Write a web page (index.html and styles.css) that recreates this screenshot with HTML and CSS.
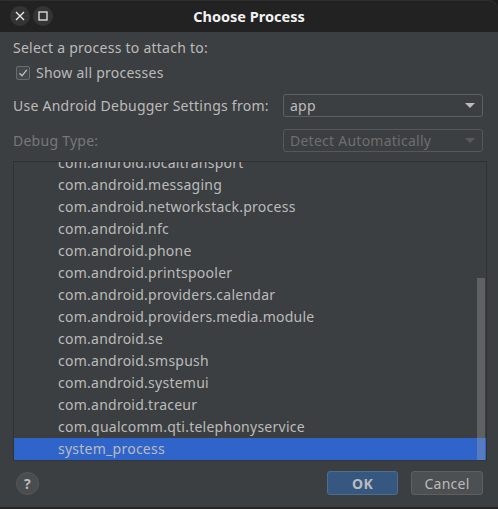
FILE: index.html
```html
<!DOCTYPE html>
<html>
<head>
<meta charset="utf-8">
<link rel="stylesheet" href="styles.css">
</head>
<body>
<div class="window">
  <div class="titlebar">
    <div class="wm-buttons">
      <span class="wm-btn">
        <svg width="10" height="10" viewBox="0 0 10 10"><path d="M1 1L9 9M9 1L1 9" stroke="#e6e6e6" stroke-width="1.4" fill="none"/></svg>
      </span>
      <span class="wm-btn">
        <svg width="10" height="10" viewBox="0 0 10 10"><rect x="1" y="1" width="8" height="8" stroke="#e6e6e6" stroke-width="1.3" fill="none"/></svg>
      </span>
    </div>
    <div class="title">Choose Process</div>
  </div>
  <div class="content">
    <div class="label first">Select a process to attach to:</div>
    <label class="check-row">
      <span class="checkbox">
        <svg width="12" height="12" viewBox="0 0 12 12"><path d="M2.5 6.2L5 8.8L9.8 2.8" stroke="#c4c4c4" stroke-width="1.3" fill="none"/></svg>
      </span>
      <span>Show all processes</span>
    </label>
    <div class="form-row">
      <span class="label">Use Android Debugger Settings from:</span>
      <div class="combo">
        <span>app</span>
        <span class="arrow"></span>
      </div>
    </div>
    <div class="form-row second disabled">
      <span class="label">Debug Type:</span>
      <div class="combo">
        <span>Detect Automatically</span>
        <span class="arrow"></span>
      </div>
    </div>
    <div class="list">
      <div class="list-inner">
        <div class="item">com.android.localtransport</div>
        <div class="item">com.android.messaging</div>
        <div class="item">com.android.networkstack.process</div>
        <div class="item">com.android.nfc</div>
        <div class="item">com.android.phone</div>
        <div class="item">com.android.printspooler</div>
        <div class="item">com.android.providers.calendar</div>
        <div class="item">com.android.providers.media.module</div>
        <div class="item">com.android.se</div>
        <div class="item">com.android.smspush</div>
        <div class="item">com.android.systemui</div>
        <div class="item">com.android.traceur</div>
        <div class="item">com.qualcomm.qti.telephonyservice</div>
        <div class="item selected">system_process</div>
      </div>
      <div class="scrollbar"></div>
    </div>
    <div class="footer">
      <span class="help">?</span>
      <div class="actions">
        <button class="btn ok">OK</button>
        <button class="btn cancel">Cancel</button>
      </div>
    </div>
  </div>
  <div class="bottom-edge"></div>
</div>
</body>
</html>
```

FILE: styles.css
```css
html, body {
  margin: 0;
  padding: 0;
  background: #1e1e1e;
}
body {
  width: 498px;
  height: 509px;
  overflow: hidden;
  font-family: "Noto Sans", "DejaVu Sans", sans-serif;
  font-size: 14px;
  letter-spacing: 0.25px;
  color: #bbbbbb;
}
.window {
  width: 498px;
  height: 509px;
  display: flex;
  flex-direction: column;
  background: #3c3f41;
  border-top-right-radius: 10px;
  overflow: hidden;
}
.titlebar {
  height: 32px;
  flex: none;
  background: #222222;
  display: flex;
  align-items: center;
  position: relative;
  border-top-right-radius: 10px;
  box-shadow: inset 0 1px 0 #2e2e2e;
}
.wm-buttons {
  display: flex;
  gap: 3px;
  padding-left: 10px;
}
.wm-btn {
  width: 20px;
  height: 20px;
  border-radius: 50%;
  background: #343434;
  display: flex;
  align-items: center;
  justify-content: center;
}
.title {
  position: absolute;
  left: 0;
  right: 0;
  text-align: center;
  font-weight: bold;
  font-size: 14.5px;
  letter-spacing: 0;
  color: #f2f2f2;
  pointer-events: none;
}
.content {
  flex: 1;
  display: flex;
  flex-direction: column;
  padding: 7px 11px 0 13px;
}
.label {
  line-height: 18px;
}
.check-row {
  display: flex;
  align-items: center;
  gap: 6px;
  margin-top: 7px;
  padding-left: 3px;
  line-height: 18px;
}
.checkbox {
  width: 12px;
  height: 12px;
  border: 1px solid #6b6b6b;
  border-radius: 2px;
  background: #43494a;
  display: flex;
  align-items: center;
  justify-content: center;
}
.form-row {
  display: flex;
  align-items: center;
  justify-content: space-between;
  margin-top: 12px;
  margin-right: 4px;
}
.form-row.second {
  margin-top: 12px;
}
.combo {
  height: 21px;
  border: 1px solid #5e6060;
  border-radius: 3px;
  display: flex;
  align-items: center;
  justify-content: space-between;
  padding: 0 0 0 6px;
  box-sizing: content-box;
  width: 192px;
}
.arrow {
  width: 0;
  height: 0;
  border-left: 5px solid transparent;
  border-right: 5px solid transparent;
  border-top: 5px solid #bbbbbb;
  margin-right: 7px;
}
.disabled {
  color: #777777;
}
.disabled .combo {
  border-color: #555858;
  color: #6e6e6e;
}
.disabled .arrow {
  border-top-color: #5a5a5a;
}
.list {
  margin-top: 9px;
  height: 298px;
  border: 1px solid #2f3133;
  border-bottom-color: #333537;
  position: relative;
  overflow: hidden;
}
.list-inner {
  margin-top: -10px;
}
.item {
  height: 22px;
  line-height: 22px;
  padding-left: 44px;
  white-space: nowrap;
}
.item.selected {
  background: #2f65ca;
}
.scrollbar {
  position: absolute;
  right: 1px;
  bottom: 0;
  width: 8px;
  height: 182px;
  background: rgba(170, 170, 170, 0.32);
}
.footer {
  display: flex;
  align-items: center;
  justify-content: space-between;
  margin-top: 10px;
  margin-right: 4px;
}
.help {
  width: 21px;
  height: 21px;
  border-radius: 50%;
  background: #4a4d4f;
  border: 1px solid #555859;
  display: flex;
  align-items: center;
  justify-content: center;
  font-weight: bold;
  font-size: 14px;
  color: #bbbbbb;
  margin-left: 3px;
}
.actions {
  display: flex;
  gap: 13px;
}
.btn {
  height: 24px;
  border-radius: 3px;
  font-family: inherit;
  font-size: 14px;
  letter-spacing: 0.25px;
  color: #bbbbbb;
  padding: 0;
}
.btn.ok {
  width: 71px;
  background: #365880;
  border: 1px solid #4c708c;
  font-weight: bold;
}
.btn.cancel {
  width: 72px;
  background: #4c5052;
  border: 1px solid #5e6060;
}
.bottom-edge {
  height: 2px;
  flex: none;
  background: #262626;
}
```
